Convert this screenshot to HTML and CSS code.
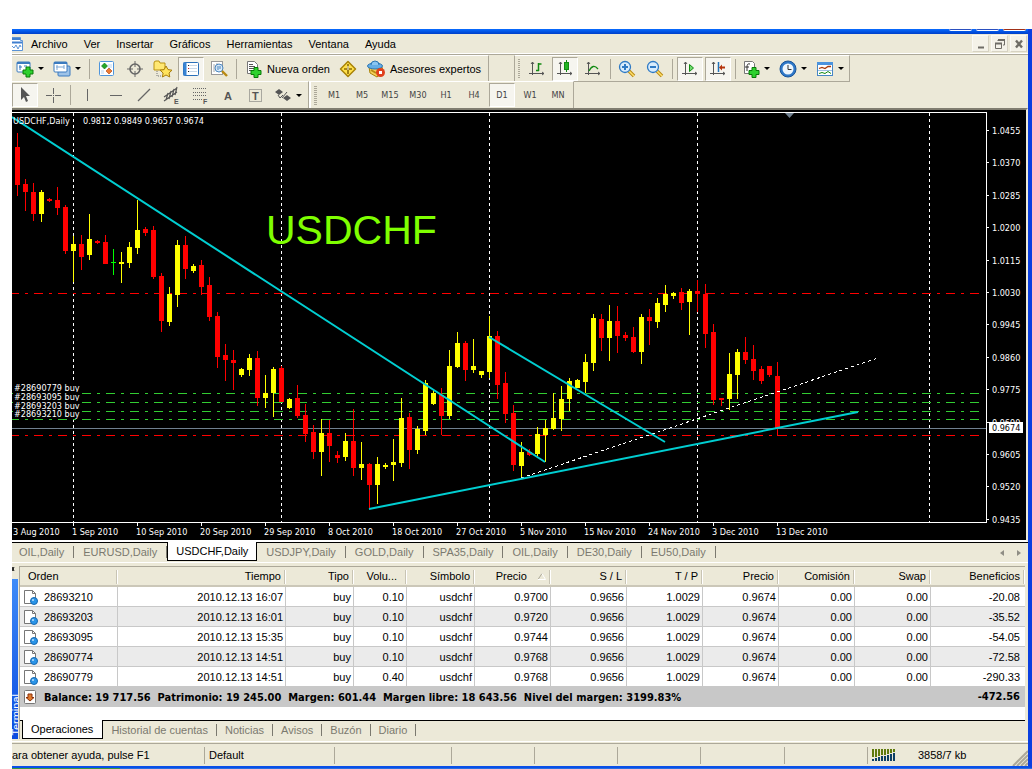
FILE: index.html
```
<!DOCTYPE html>
<html lang="es">
<head>
    <meta charset="UTF-8">
    <title>USDCHF,Daily</title>
    <link rel="stylesheet" href="styles.css">
</head>
<body>

<div class="window">
    <div class="titlebar">
        <span class="win-btn"></span>
        <span class="win-btn"></span>
        <span class="win-btn close"></span>
    </div>

    <div class="client">
        <!-- menu -->
        <nav class="menubar">
            <svg class="app-icon" width="12" height="16" viewBox="0 0 12 16"><path d="M0 1.500H8.500V4.500H10.500V14.500H0" fill="#fff" stroke="#5b93d6"/><path d="M0 3H8M0 6.500H10" stroke="#3f7fcf" stroke-width="2"/><path d="M0 10l2 2 2-3 2 4 2-4 1 2" fill="none" stroke="#5b93d6"/></svg>
            <button>Archivo</button>
            <button>Ver</button>
            <button>Insertar</button>
            <button>Gráficos</button>
            <button>Herramientas</button>
            <button>Ventana</button>
            <button>Ayuda</button>
            <div class="mdi">
                <button aria-label="Minimizar"><svg width="16" height="16"><path d="M5 11.500h6" stroke="#6f6d66" stroke-width="2"/></svg></button>
                <button aria-label="Restaurar"><svg width="16" height="16"><path d="M6 5V4H12.500V9H11" fill="none" stroke="#6f6d66"/><path d="M6 4h7M3 7.500h7" stroke="#6f6d66" stroke-width="2"/><path d="M3.500 7V12.500H9.500V7" fill="none" stroke="#6f6d66"/></svg></button>
                <button aria-label="Cerrar"><svg width="16" height="16"><path d="M5 4.500l6 7M11 4.500l-6 7" stroke="#6f6d66" stroke-width="2.400"/></svg></button>
            </div>
        </nav>

        <!-- standard toolbar -->
        <div class="toolrow">
            <div class="toolbar main">
                <button class="tool drop" aria-label="Nuevo gráfico">
                    <svg width="18" height="18"><rect x="1" y="2" width="13" height="10" rx="1" fill="#fff" stroke="#3b7bbf"/><path d="M1 3h13" stroke="#3b7bbf" stroke-width="2"/><path d="M4 5v5M3 7h3M8 6h3" stroke="#3b7bbf"/><path d="M7 10h3V7h4v3h3v4h-3v3h-4v-3H7z" fill="#2ed12e" stroke="#087a08"/></svg>
                    <i class="caret"></i>
                </button>
                <button class="tool drop" aria-label="Perfiles">
                    <svg width="18" height="18"><rect x="5" y="6" width="12" height="10" rx="1" fill="#9ec3e8" stroke="#3b7bbf"/><rect x="1" y="2" width="13" height="10" rx="1" fill="#fff" stroke="#3b7bbf"/><path d="M1 3h13" stroke="#3b7bbf" stroke-width="2"/><path d="M4 5v5M3 7h8M11 5v4" stroke="#7aa6d4"/></svg>
                    <i class="caret"></i>
                </button>
                <i class="sep"></i>
                <button class="tool" aria-label="Observación del mercado"><svg width="18" height="18"><rect x="1.500" y="1.500" width="14" height="14" rx="1" fill="#fff" stroke="#4e95dc"/><path d="M3 11h3M3 13h3M10 5h4M10 7h4" stroke="#b9d4ef"/><path d="M6.500 3l3 3-3 3-3-3z" fill="#25a825" stroke="#0d6d0d" stroke-width=".6"/><path d="M11 8l3 3-3 3-3-3z" fill="#ee7a30" stroke="#a83a0a" stroke-width=".6"/></svg></button>
                <button class="tool" aria-label="Ventana de datos"><svg width="18" height="18" fill="none" stroke="#666"><circle cx="9" cy="9" r="5" stroke-width="1.600"/><path d="M9 1v6M9 11v6M1 9h6M11 9h6"/></svg></button>
                <button class="tool" aria-label="Navegador"><svg width="20" height="18"><path d="M1 3q0-2 2-2h3l1 2h5v7H1z" fill="#ffe873" stroke="#b99112"/><path d="M4 11v5h4" fill="none" stroke="#777" stroke-dasharray="1 1"/><path d="M13 6l2 3.600 4 .6-3 2.800.8 4-3.800-2-3.600 2 .7-4-3-2.800 4-.6z" fill="#ffe35c" stroke="#a87d08"/></svg></button>
                <button class="tool pressed" aria-label="Terminal"><svg width="18" height="18"><rect x="1.500" y="2.500" width="15" height="13" rx="1" fill="#fff" stroke="#2a6fb8"/><path d="M3 2.500v13" stroke="#3884d4" stroke-width="3"/><path d="M7 5.500h8M7 8.500h8M7 11.500h8" stroke="#c9d8e8"/><path d="M6 5.500h1M6 11.500h1" stroke="#222"/><path d="M6 8.500h1" stroke="#d22"/></svg></button>
                <button class="tool" aria-label="Probador de estrategias"><svg width="18" height="18"><rect x="1.500" y="1.500" width="11" height="13" fill="#fff" stroke="#999"/><path d="M4 4v8M7 3v6M10 4v4" stroke="#aaa"/><circle cx="9" cy="8" r="4" fill="#cfe6fa" fill-opacity=".8" stroke="#4b86be"/><path d="M8 6v4M10 6v3" stroke="#4b86be"/><path d="M12 11l5 5" stroke="#b98a14" stroke-width="2.400"/></svg></button>
                <i class="sep"></i>
                <button class="tool label"><svg width="18" height="18"><path d="M2.500 1.500h7l3 3v9h-10z" fill="#fff" stroke="#777"/><path d="M4 4.500h4M4 6.500h6M4 8.500h6M4 10.500h3" stroke="#555"/><path d="M6 10.500h3v-3h4v3h3v4h-3v3H9v-3H6z" fill="#2ed12e" stroke="#087a08"/></svg>Nueva orden</button>
                <button class="tool" aria-label="MetaEditor"><svg width="18" height="18"><path d="M9 1.500L16.500 9 9 16.500 1.500 9z" fill="#ffe04a" stroke="#a88207" stroke-linejoin="round" stroke-width="1.500"/><path d="M9 4v10M5 9h8" stroke="#8a6b08" stroke-width="1.600"/><path d="M9 6v4" stroke="#fff"/></svg></button>
                <button class="tool label"><svg width="19" height="18"><path d="M2 7h13l1 5-6 5-7-4z" fill="#f6d05c" stroke="#a88207"/><path d="M4 10l5 3" stroke="#b98a14" stroke-width="2"/><ellipse cx="8" cy="6" rx="7.500" ry="3" fill="#65aee6" stroke="#2b75b3"/><path d="M4 5q0-4 4-4t4 4" fill="#8bc6f2" stroke="#2b75b3"/><circle cx="13.500" cy="12.500" r="4.500" fill="#e0401c"/><rect x="12" y="11" width="3" height="3" fill="#fff"/></svg>Asesores expertos</button>
            </div>
            <div class="toolbar charts">
                <i class="grip"></i>
                <button class="tool" aria-label="Barras"><svg width="18" height="18" fill="none" stroke="#555"><path d="M4.500 2v13M1 13.500h15M3 4l1.500-2L6 4M14 12l2 1.500-2 1.500"/><path d="M10.500 3v8M10.500 4h3M8 10.500h3" stroke="#128a12" stroke-width="1.500"/></svg></button>
                <button class="tool pressed" aria-label="Velas"><svg width="18" height="18" fill="none" stroke="#555"><path d="M4.500 2v13M1 13.500h15M3 4l1.500-2L6 4M14 12l2 1.500-2 1.500"/><path d="M10.500 0v12" stroke="#128a12"/><rect x="8.500" y="2.500" width="4" height="7" fill="#22b522" stroke="#128a12"/></svg></button>
                <button class="tool" aria-label="Línea"><svg width="18" height="18" fill="none" stroke="#555"><path d="M4.500 2v13M1 13.500h15M3 4l1.500-2L6 4M14 12l2 1.500-2 1.500"/><path d="M5 11q4-8 9-2" stroke="#128a12" stroke-width="1.300"/></svg></button>
                <i class="sep"></i>
                <button class="tool" aria-label="Acercar"><svg width="18" height="18"><path d="M11 11l5 5" stroke="#b98a14" stroke-width="3.500"/><path d="M11 11l5 5" stroke="#ffe06a" stroke-width="1.500"/><circle cx="7" cy="7" r="5.500" fill="#d8ecfc" stroke="#2f7ac4" stroke-width="1.300"/><path d="M4 7h6M7 4v6" stroke="#2f7ac4" stroke-width="2"/></svg></button>
                <button class="tool" aria-label="Alejar"><svg width="18" height="18"><path d="M11 11l5 5" stroke="#b98a14" stroke-width="3.500"/><path d="M11 11l5 5" stroke="#ffe06a" stroke-width="1.500"/><circle cx="7" cy="7" r="5.500" fill="#d8ecfc" stroke="#2f7ac4" stroke-width="1.300"/><path d="M4 7h6" stroke="#2f7ac4" stroke-width="2"/></svg></button>
                <i class="sep"></i>
                <button class="tool pressed" aria-label="Desplazamiento automático"><svg width="18" height="18" fill="none" stroke="#555"><path d="M4.500 2v13M1 13.500h15M3 4l1.500-2L6 4M14 12l2 1.500-2 1.500"/><path d="M8.500 4.500v7l4-3.500z" fill="#6fdc6f" stroke="#128a12"/></svg></button>
                <button class="tool pressed" aria-label="Desplazar gráfico"><svg width="18" height="18" fill="none" stroke="#555"><path d="M4.500 2v13M1 13.500h15M3 4l1.500-2L6 4M14 12l2 1.500-2 1.500"/><path d="M9.500 2v10" stroke="#2272b8" stroke-width="1.500"/><path d="M10 7.500l3-3v2h3v2h-3v2z" fill="#b5340c" stroke="none"/></svg></button>
                <i class="sep"></i>
                <button class="tool drop" aria-label="Indicadores">
                    <svg width="18" height="18"><path d="M2.500 1.500h8l2 2v10h-10z" fill="#fff" stroke="#777"/><path d="M8 4q-3-1-3 3v4M3 7h4" fill="none" stroke="#333"/><path d="M7 10.500h3v-3h4v3h3v4h-3v3h-4v-3H7z" fill="#2ed12e" stroke="#087a08"/></svg>
                    <i class="caret"></i>
                </button>
                <button class="tool drop" aria-label="Períodos">
                    <svg width="18" height="18"><circle cx="9" cy="9" r="8" fill="#2e78c8" stroke="#1a5499"/><circle cx="9" cy="9" r="5.500" fill="#eef6fd"/><path d="M9 5v4.500h3.500" fill="none" stroke="#333"/></svg>
                    <i class="caret"></i>
                </button>
                <button class="tool drop" aria-label="Plantillas">
                    <svg width="18" height="18"><rect x="1.500" y="2.500" width="15" height="13" fill="#fff" stroke="#4686c6"/><path d="M1 3.500h16" stroke="#4a93de" stroke-width="3"/><path d="M3 8.500l3-1 3 1 3-2h3" fill="none" stroke="#a83a0a" stroke-width="1.300"/><path d="M2 10.500h14" stroke="#9fc1e2"/><path d="M3 13.500l3-1 3 1 3-2 3 2" fill="none" stroke="#128a12"/></svg>
                    <i class="caret"></i>
                </button>
            </div>
        </div>

        <!-- drawing tools and timeframes -->
        <div class="toolrow">
            <div class="toolbar lines">
                <button class="tool pressed" aria-label="Cursor"><svg width="18" height="18"><path d="M5 1v13l3-3 2 5 2-1-2-5h4z" fill="#555"/></svg></button>
                <button class="tool" aria-label="Cruz"><svg width="18" height="18" stroke="#666"><path d="M9.500 2v6M9.500 11v6M2 9.500h6M11 9.500h6M9 9.500h1"/></svg></button>
                <i class="sep"></i>
                <button class="tool" aria-label="Línea vertical"><svg width="18" height="18"><path d="M8.500 3v12" stroke="#666"/></svg></button>
                <button class="tool" aria-label="Línea horizontal"><svg width="18" height="18"><path d="M3 9.500h12" stroke="#666"/></svg></button>
                <button class="tool" aria-label="Línea de tendencia"><svg width="18" height="18"><path d="M3 15L15 3" stroke="#666" stroke-width="1.200"/></svg></button>
                <button class="tool" aria-label="Canal equidistante"><svg width="18" height="18" stroke="#555"><path d="M1 11L14 2M1 15L14 6M3 14l2-7M6 13l2-8M9 11l2-8M12 9l2-8" stroke-width="1.200"/><text x="11" y="18" class="glyph-s">E</text></svg></button>
                <button class="tool" aria-label="Fibonacci"><svg width="18" height="18" stroke="#666"><path d="M2 2.500h14M2 6.500h14M2 9.500h14M2 13.500h9" stroke-dasharray="1 1"/><text x="12" y="18" class="glyph-s">F</text></svg></button>
                <button class="tool" aria-label="Texto"><svg width="18" height="18"><text x="5" y="14" class="glyph">A</text></svg></button>
                <button class="tool" aria-label="Etiqueta"><svg width="18" height="18"><rect x="2.500" y="3.500" width="12" height="12" fill="none" stroke="#666" stroke-dasharray="1 1"/><text x="5" y="14" class="glyph">T</text></svg></button>
                <button class="tool drop" aria-label="Flechas">
                    <svg width="18" height="18" fill="#555"><path d="M5 3l4 3-4 3-4-3zM13 9l4 3-4 3-4-3z"/><path d="M4 9l2 3 3-3M13 6l-5 6" fill="none" stroke="#555"/></svg>
                    <i class="caret"></i>
                </button>
            </div>
            <div class="toolbar periods">
                <i class="grip"></i>
                <button class="tool tf">M1</button>
                <button class="tool tf">M5</button>
                <button class="tool tf">M15</button>
                <button class="tool tf">M30</button>
                <button class="tool tf">H1</button>
                <button class="tool tf">H4</button>
                <button class="tool tf pressed">D1</button>
                <button class="tool tf">W1</button>
                <button class="tool tf">MN</button>
            </div>
        </div>

        <!-- chart -->
        <div class="chart-box">
            <svg class="chart" id="chart" viewBox="12 110 1014 430">
                <g id="grid" shape-rendering="crispEdges">
                    <path class="month" d="M73.500 113V522M281.500 113V522M489.500 113V522M697.500 113V522M929.500 113V522"/>
                    <path class="stop" d="M10 293.500H979M10 435.500H979"/>
                    <path class="order" d="M10 393.500H979M10 402.500H979M10 411.500H979M10 419.500H979"/>
                    <path class="bid" d="M12 428.500H986"/>
                </g>
                <text class="headline" x="266" y="244">USDCHF</text>
                <g id="candles" shape-rendering="crispEdges"></g>
                <path class="support" shape-rendering="crispEdges" d="M521 478L878 358"/>
                <g>
                    <path class="trend" d="M12 117L545 462M489 337L665 442M369 509L858 412"/>
                </g>
                <g shape-rendering="crispEdges">
                    <path class="frame" d="M12 112.500H986.500V522.500H12"/>
                </g>
                <path class="shift" d="M785 113h9l-4.500 5z"/>
                <text x="13" y="124">USDCHF,Daily</text>
                <text x="83" y="124">0.9812 0.9849 0.9657 0.9674</text>
                <g id="labels"></g>
            </svg>
        </div>

        <div class="tabs chart-tabs">
            <button>OIL,Daily</button>
            <button>EURUSD,Daily</button>
            <button class="active">USDCHF,Daily</button>
            <button>USDJPY,Daily</button>
            <button>GOLD,Daily</button>
            <button>SPA35,Daily</button>
            <button>OIL,Daily</button>
            <button>DE30,Daily</button>
            <button>EU50,Daily</button>
            <div class="scroll">
                <svg width="4" height="6"><path d="M4 0v6L0 3z" fill="#8f8d85"/></svg>
                <svg width="4" height="6"><path d="M0 0v6l4-3z" fill="#8f8d85"/></svg>
            </div>
        </div>

        <!-- terminal -->
        <div class="terminal">
            <div class="side">
                <svg width="3" height="6"><path d="M0 1l2 4M2 1L0 5" stroke="#000"/></svg>
                <div class="side-title"><span>Terminal</span></div>
            </div>
            <div class="panel">
                <table>
                    <colgroup>
                        <col class="c-order"><col class="c-time"><col class="c-type"><col class="c-vol"><col class="c-type">
                        <col class="c-num"><col class="c-num"><col class="c-num"><col class="c-num"><col class="c-num"><col class="c-num">
                        <col>
                    </colgroup>
                    <thead>
                        <tr>
                            <th class="left">Orden</th><th>Tiempo</th><th>Tipo</th><th class="vol">Volu...</th><th>Símbolo</th>
                            <th>Precio <svg class="sort" width="8" height="7"><path d="M0 6.500L4 .5" stroke="#aca899"/><path d="M4 .5l3.500 6H0" fill="none" stroke="#fff"/></svg></th>
                            <th>S / L</th><th>T / P</th><th>Precio</th><th>Comisión</th><th>Swap</th><th>Beneficios</th>
                        </tr>
                    </thead>
                    <tbody>
                        <tr><td class="left"><svg class="doc"><use href="#doc"/></svg>28693210</td><td>2010.12.13 16:07</td><td>buy</td><td>0.10</td><td>usdchf</td><td>0.9700</td><td>0.9656</td><td>1.0029</td><td>0.9674</td><td>0.00</td><td>0.00</td><td>-20.08</td></tr>
                        <tr><td class="left"><svg class="doc"><use href="#doc"/></svg>28693203</td><td>2010.12.13 16:01</td><td>buy</td><td>0.10</td><td>usdchf</td><td>0.9720</td><td>0.9656</td><td>1.0029</td><td>0.9674</td><td>0.00</td><td>0.00</td><td>-35.52</td></tr>
                        <tr><td class="left"><svg class="doc"><use href="#doc"/></svg>28693095</td><td>2010.12.13 15:35</td><td>buy</td><td>0.10</td><td>usdchf</td><td>0.9744</td><td>0.9656</td><td>1.0029</td><td>0.9674</td><td>0.00</td><td>0.00</td><td>-54.05</td></tr>
                        <tr><td class="left"><svg class="doc"><use href="#doc"/></svg>28690774</td><td>2010.12.13 14:51</td><td>buy</td><td>0.10</td><td>usdchf</td><td>0.9768</td><td>0.9656</td><td>1.0029</td><td>0.9674</td><td>0.00</td><td>0.00</td><td>-72.58</td></tr>
                        <tr><td class="left"><svg class="doc"><use href="#doc"/></svg>28690779</td><td>2010.12.13 14:51</td><td>buy</td><td>0.40</td><td>usdchf</td><td>0.9768</td><td>0.9656</td><td>1.0029</td><td>0.9674</td><td>0.00</td><td>0.00</td><td>-290.33</td></tr>
                    </tbody>
                    <tfoot>
                        <tr>
                            <td class="left" colspan="11"><svg class="doc"><rect x="1.500" y="1.500" width="11" height="13" rx="1" fill="#fff" stroke="#777"/><path d="M7 12L3 8.500h2V5h4v3.500h2z" fill="#e07a2c" stroke="#8a2f08"/></svg>Balance: 19 717.56&nbsp; Patrimonio: 19 245.00&nbsp; Margen: 601.44&nbsp; Margen libre: 18 643.56&nbsp; Nivel del margen: 3199.83%</td>
                            <td>-472.56</td>
                        </tr>
                    </tfoot>
                </table>
                <div class="tabs panel-tabs">
                    <button class="active">Operaciones</button>
                    <button>Historial de cuentas</button>
                    <button>Noticias</button>
                    <button>Avisos</button>
                    <button>Buzón</button>
                    <button>Diario</button>
                </div>
            </div>
        </div>

        <footer class="status">
            <span class="s-help">ara obtener ayuda, pulse F1</span>
            <span class="s-profile">Default</span>
            <span class="s-wide"></span>
            <span></span>
            <span></span>
            <span></span>
            <span></span>
            <span></span>
            <div class="s-net">
                <svg width="24" height="13" shape-rendering="crispEdges">
                    <path d="M1 0v8M4 0v8M7 0v7M10 0v6M13 0v6M16 0v5M19 0v4M22 0v3" stroke="#5f7a0c" stroke-width="2"/>
                    <path d="M1 10v2M4 9v3M7 8v4M10 7v5M13 7v5M16 6v6M19 5v7M22 4v8" stroke="#0c3f66" stroke-width="2"/>
                </svg>
                3858/7 kb
            </div>
            <svg class="resize" width="16" height="16"><path d="M1 16L16 1M5 16L16 5M9 16l7-7M13 16l3-3" stroke="#aca899" stroke-width="2"/></svg>
        </footer>
    </div>
</div>
<div class="taskbar"></div>

<svg class="defs">
    <symbol id="doc" viewBox="0 0 16 16">
        <path d="M1.500 1.500h8l3 3v10h-11z" fill="#fff" stroke="#777"/>
        <path d="M9.500 1.500v3h3" fill="none" stroke="#777"/>
        <circle cx="11" cy="12" r="3.500" fill="#2a94e8" stroke="#1768b0"/>
        <circle cx="10" cy="11" r="1" fill="#bfe2ff"/>
    </symbol>
</svg>

<script src="chart.js"></script>
</body>
</html>
```
FILE: styles.css
```
* {
    margin: 0;
    padding: 0;
    box-sizing: border-box;
}

body {
    background: #fff;
    padding: 29px 0 0 12px;
    font-family: 'Liberation Sans', Arial, sans-serif;
    font-size: 11px;
    color: #000;
}

button {
    font: inherit;
    color: inherit;
    background: none;
    border: none;
    white-space: nowrap;
}

svg {
    display: block;
    flex: none;
}

.defs {
    display: none;
}

.window {
    border-right: 4px solid #0a3fe0;
    border-bottom: 2px solid #0a4fe8;
    background: #ece9d8;
}

.titlebar {
    height: 5px;
    background: linear-gradient(#0a6cff, #0050e0 60%, #0040c8);
    display: flex;
    justify-content: flex-end;
    gap: 4px;
    padding-right: 2px;
}

.win-btn {
    width: 23px;
    height: 2px;
    background: #2a4fc0;
    border-bottom: 1px solid #fff;
    border-radius: 0 0 2px 2px;
}

.win-btn.close {
    background: #a03018;
}

/* menu */
.menubar {
    height: 20px;
    display: flex;
    align-items: center;
    border-bottom: 1px solid #fff;
}

.menubar button {
    padding: 0 8px;
}

.app-icon {
    margin-right: -1px;
}

.mdi {
    display: flex;
    gap: 2px;
    margin-left: auto;
    padding-right: 1px;
}

.menubar .mdi button {
    width: 17px;
    height: 17px;
    padding: 0;
    background: #f4f2e8;
    border: 1px solid #fbfaf5;
    border-right-color: #d6d2c2;
    border-bottom-color: #d6d2c2;
}

/* toolbars */
.toolrow {
    height: 27px;
    display: flex;
    border-top: 1px solid #aca899;
}

.toolrow + .toolrow {
    border-top: none;
}

.toolbar {
    height: 27px;
    display: flex;
    align-items: center;
    border-top: 1px solid #fff;
    border-bottom: 1px solid #aca899;
    border-right: 1px solid #aca899;
}

.toolbar.main {
    width: 477px;
}

.toolbar.charts {
    margin-left: 25px;
    width: 336px;
    border-left: 1px solid #aca899;
}

.toolbar.lines {
    width: 297px;
    border-bottom: none;
}

.toolbar.periods {
    width: 265px;
    border-left: 2px solid #fff;
    border-bottom: none;
}

.tool {
    width: 28px;
    height: 24px;
    display: flex;
    align-items: center;
    justify-content: center;
    flex: none;
}

.tool.drop {
    width: 37px;
    gap: 4px;
    padding-right: 2px;
}

.tool.label {
    width: auto;
    gap: 4px;
    padding: 0 4px 0 5px;
}

.tool.tf {
    font: 9px 'DejaVu Sans Condensed', 'DejaVu Sans', sans-serif;
    color: #444;
}

.tool.pressed {
    width: 26px;
    margin: 0 1px;
    background: #f6f5ef;
    border: 1px solid #aca899;
    border-right-color: #fff;
    border-bottom-color: #fff;
}

.toolbar.lines .tool.pressed {
    margin-left: 0;
}

.caret {
    border: 3px solid transparent;
    border-top-color: #000;
    border-bottom: none;
}

.sep {
    width: 1px;
    height: 20px;
    margin: 0 3px;
    background: #aca899;
}

.grip {
    width: 3px;
    height: 19px;
    margin: 0 3px;
    background: repeating-linear-gradient(#aca899 0 1px, transparent 1px 2px);
}

.glyph {
    font: bold 11px 'Liberation Sans', Arial, sans-serif;
    fill: #555;
}

.glyph-s {
    font: bold 7px 'Liberation Sans', Arial, sans-serif;
    fill: #555;
    stroke: none;
}

/* chart */
.chart-box {
    border-top: 2px solid #807d70;
    border-right: 2px solid #ece9d8;
    border-bottom: 2px solid #fff;
}

.chart {
    width: 100%;
    height: auto;
    background: #000;
    fill: #fff;
    font: 9px 'DejaVu Sans Condensed', 'DejaVu Sans', sans-serif;
}

.chart path {
    fill: none;
}

.chart .shift {
    fill: #708090;
}

.month {
    stroke: #fff;
    stroke-dasharray: 3 3;
}

.stop,
.order {
    stroke: #f00;
    stroke-dasharray: 9 6 3 6;
}

.order {
    stroke: #32cd32;
}

.bid {
    stroke: #708090;
}

.frame,
.tick {
    stroke: #fff;
}

.trend {
    stroke: #00ced1;
    stroke-width: 2;
}

.support {
    stroke: #fff;
    stroke-dasharray: 3 3;
}

.headline {
    font: 41px 'Liberation Sans', Arial, sans-serif;
    fill: #7fff00;
}

.bull { fill: #ff0; }
.bear { fill: #f00; }
.doji { fill: #0f0; }
.mask { fill: #000; }
.price-box { fill: #fff; }
.price-now { fill: #000; }

/* tabs */
.tabs {
    display: flex;
    color: #7b796f;
}

.tabs button {
    position: relative;
    padding: 0 10px 0 9px;
    height: 17px;
}

.tabs button::after {
    content: "";
    position: absolute;
    right: 0;
    top: 3px;
    height: 12px;
    border-right: 1px solid #7b796f;
}

.tabs .active {
    background: #fff;
    color: #000;
    border: 1px solid #000;
    border-top: none;
    margin-top: -1px;
    height: 19px;
}

.tabs .active::after {
    display: none;
}

.chart-tabs {
    height: 21px;
    border-top: 1px solid #000;
    border-bottom: 1px solid #fff;
}

.chart-tabs button:first-child {
    padding-left: 7px;
}

.chart-tabs .active {
    padding: 0 8px;
}

.scroll {
    display: flex;
    align-items: center;
    gap: 13px;
    margin-left: auto;
    padding-right: 7px;
}

/* terminal */
.terminal {
    display: flex;
    padding: 3px 3px 2px 0;
    border-bottom: 1px solid #fff;
}

.side {
    width: 7px;
    display: flex;
    flex-direction: column;
    gap: 7px;
}

.side-title {
    flex: 1;
    width: 6px;
    background: linear-gradient(#3f8cf8, #0a4be0);
    overflow: hidden;
    display: flex;
    flex-direction: column;
    justify-content: flex-end;
}

.side-title span {
    writing-mode: vertical-rl;
    rotate: 180deg;
    line-height: 8px;
    color: #fff;
    padding-top: 3px;
}

.panel {
    flex: 1;
    min-width: 0;
    border-left: 1px solid #aca899;
    border-top: 1px solid #aca899;
    background: #fff;
}

table {
    width: 100%;
    table-layout: fixed;
    border-collapse: separate;
    border-spacing: 0;
}

.c-order { width: 98px; }
.c-time { width: 168px; }
.c-type { width: 68px; }
.c-vol { width: 53px; }
.c-num { width: 76px; }

th {
    position: relative;
    height: 20px;
    padding: 0 5px 0 0;
    font-weight: normal;
    text-align: right;
    white-space: nowrap;
    background: #ece9d8;
    border-bottom: 2px solid #cbc7b8;
}

th::after {
    content: "";
    position: absolute;
    right: 0;
    top: 3px;
    height: 14px;
    border-left: 1px solid #c8c4b4;
    border-right: 1px solid #fff;
}

th.left {
    text-align: left;
    padding-left: 8px;
}

th.vol {
    padding-right: 10px;
}

.sort {
    display: inline-block;
    margin-left: 8px;
}

td {
    height: 20px;
    padding: 0 2px 0 0;
    text-align: right;
    white-space: nowrap;
    border-right: 1px solid #c8c8c8;
    border-bottom: 1px solid #c8c8c8;
}

td:last-child {
    padding-right: 5px;
    border-right: none;
}

tbody tr:nth-child(even) td {
    background: #ebebeb;
}

td.left {
    text-align: left;
    padding-left: 3px;
}

.doc {
    display: inline-block;
    width: 16px;
    height: 16px;
    margin-right: 5px;
    vertical-align: -4px;
}

tfoot td {
    background: #c8c8c8;
    border-color: #c8c8c8;
    font: bold 11px 'DejaVu Sans Condensed', 'DejaVu Sans', sans-serif;
}

.panel-tabs {
    height: 19px;
    margin-top: 13px;
    padding-left: 2px;
    border-top: 1px solid #000;
    background: #ece9d8;
}

.panel-tabs button {
    padding: 0 9px 0 8px;
}

/* status bar */
.status {
    height: 23px;
    display: flex;
    align-items: center;
    margin-top: 1px;
    border-top: 1px solid #aca899;
    overflow: hidden;
}

.status span {
    flex: 83 1 0;
    height: 17px;
    line-height: 17px;
    padding-left: 4px;
    border-right: 1px solid #aca899;
    white-space: nowrap;
}

.status .s-help {
    flex: 0 0 193px;
    padding-left: 0;
}

.status .s-profile {
    flex: 133 1 0;
}

.status .s-wide {
    flex: 118 1 0;
}

.s-net {
    display: flex;
    align-items: center;
    gap: 22px;
    width: 144px;
    padding-left: 4px;
}

.resize {
    align-self: flex-end;
}

.taskbar {
    height: 2px;
    background: linear-gradient(90deg, #3c9a3c 0 108px, #2a6fe0 108px);
}
```
FILE: chart.js
```
// high, low, body top, body bottom, colour (y = up, r = down, g = unchanged)
const candles = [
    [133,196,147,185,'r'],[179,211,184,192,'r'],[183,221,192,214,'r'],[190,222,192,214,'y'],
    [198,202,199,201,'r'],[187,215,200,208,'r'],[205,254,207,251,'r'],[236,282,244,251,'y'],
    [235,270,244,257,'r'],[214,260,239,255,'y'],[240,244,241,243,'r'],[235,264,242,264,'r'],
    [249,275,262,263,'g'],[252,283,262,264,'y'],[242,268,247,263,'y'],[200,254,230,248,'y'],
    [227,236,229,233,'r'],[226,279,230,277,'r'],[273,332,276,321,'r'],[287,326,294,322,'y'],
    [240,307,245,295,'y'],[236,279,245,269,'r'],[264,273,266,271,'y'],[260,295,265,287,'r'],
    [277,321,285,317,'r'],[312,368,316,357,'r'],[344,381,355,360,'r'],[350,390,360,363,'r'],
    [368,377,369,375,'y'],[354,376,358,370,'y'],[351,406,358,398,'r'],[375,408,393,398,'y'],
    [367,417,369,393,'y'],[366,402,368,402,'r'],[398,409,399,408,'y'],[385,418,398,416,'r'],
    [404,442,415,434,'r'],[425,459,432,452,'r'],[419,476,433,452,'y'],[420,462,433,446,'r'],
    [451,463,455,458,'r'],[433,461,441,457,'y'],[409,476,441,468,'r'],[442,480,464,468,'y'],
    [463,509,464,485,'r'],[457,504,464,485,'y'],[463,469,465,467,'y'],[439,481,462,465,'y'],
    [398,467,418,463,'y'],[413,469,417,450,'r'],[426,454,429,450,'y'],[380,435,383,431,'y'],
    [390,405,393,404,'y'],[388,435,395,416,'r'],[350,419,366,416,'y'],[332,368,343,367,'y'],
    [341,381,343,370,'r'],[339,373,366,370,'y'],[371,378,371,375,'y'],[316,378,336,372,'y'],
    [331,399,336,385,'r'],[372,423,383,414,'r'],[405,471,413,465,'r'],[442,478,452,466,'y'],
    [449,456,452,455,'r'],[427,456,434,454,'y'],[420,462,428,435,'y'],[393,430,418,429,'y'],
    [386,431,399,419,'y'],[378,411,381,399,'y'],[379,388,380,388,'y'],[354,393,362,382,'y'],
    [314,371,318,363,'y'],[314,351,319,338,'r'],[305,361,321,338,'y'],[306,353,321,336,'r'],
    [332,341,335,338,'r'],[327,353,337,352,'r'],[314,364,317,352,'y'],[309,345,317,321,'r'],
    [298,328,303,322,'y'],[285,312,294,305,'y'],[292,299,293,296,'y'],[288,310,292,303,'r'],
    [289,335,291,302,'y'],[280,312,291,294,'r'],[284,348,294,334,'r'],[324,405,332,400,'r'],
    [398,406,398,400,'r'],[353,410,374,399,'y'],[349,399,352,375,'y'],[337,364,352,360,'r'],
    [345,380,359,371,'r'],[366,384,369,381,'r'],[366,377,366,375,'r'],[362,436,376,428,'r']
];

const names = { y: 'bull', r: 'bear', g: 'doji' };
const NS = 'http://www.w3.org/2000/svg';

function add(parent, tag, attrs, text) {
    const el = document.createElementNS(NS, tag);
    for (const key in attrs) el.setAttribute(key, attrs[key]);
    if (text) el.textContent = text;
    parent.appendChild(el);
}

const body = document.getElementById('candles');
candles.forEach(([high, low, top, bottom, c], i) => {
    const x = 15 + i * 8;
    add(body, 'rect', { class: names[c], x: x + 2, y: high, width: 1, height: low - high });
    add(body, 'rect', { class: names[c], x: x, y: top, width: 5, height: bottom - top });
});

const labels = document.getElementById('labels');

// open orders
[['#28690779 buy', 391], ['#28693095 buy', 400], ['#28693203 buy', 409], ['#28693210 buy', 417]].forEach(([text, y]) => {
    add(labels, 'rect', { class: 'mask', x: 13, y: y - 8, width: 67, height: 10 });
    add(labels, 'text', { x: 14, y: y }, text);
});

// dates
['3 Aug 2010', '1 Sep 2010', '10 Sep 2010', '20 Sep 2010', '29 Sep 2010', '8 Oct 2010', '18 Oct 2010',
 '27 Oct 2010', '5 Nov 2010', '15 Nov 2010', '24 Nov 2010', '3 Dec 2010', '13 Dec 2010'].forEach((text, i) => {
    const x = i === 0 ? 13 : 9 + i * 64;
    if (i > 0) add(labels, 'path', { class: 'tick', d: `M${x + 0.5} 522v4` });
    add(labels, 'text', { x: i === 0 ? x : x - 1, y: 535 }, text);
});

// prices
['1.0455', '1.0370', '1.0285', '1.0200', '1.0115', '1.0030', '0.9945',
 '0.9860', '0.9775', '0.9690', '0.9605', '0.9520', '0.9435'].forEach((text, i) => {
    const y = Math.round(130 + i * 32.4);
    add(labels, 'path', { class: 'tick', d: `M986 ${y + 0.5}h3` });
    add(labels, 'text', { x: 992, y: y + 4 }, text);
});
add(labels, 'rect', { class: 'price-box', x: 989, y: 422, width: 34, height: 11 });
add(labels, 'text', { class: 'price-now', x: 992, y: 431 }, '0.9674');
```
